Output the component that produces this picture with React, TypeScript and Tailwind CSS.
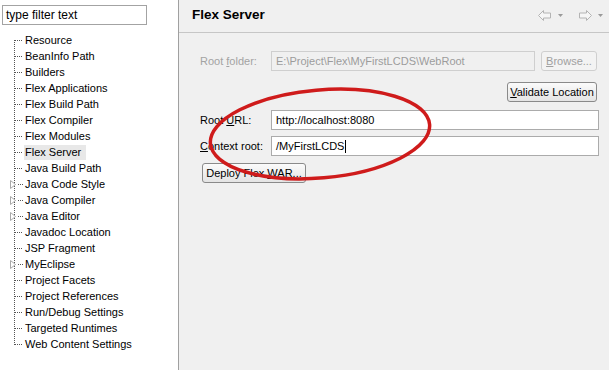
import React from "react";

type Item = { label: string; exp?: boolean; sel?: boolean };

const items: Item[] = [
  { label: "Resource" },
  { label: "BeanInfo Path" },
  { label: "Builders" },
  { label: "Flex Applications" },
  { label: "Flex Build Path" },
  { label: "Flex Compiler" },
  { label: "Flex Modules" },
  { label: "Flex Server", sel: true },
  { label: "Java Build Path" },
  { label: "Java Code Style", exp: true },
  { label: "Java Compiler", exp: true },
  { label: "Java Editor", exp: true },
  { label: "Javadoc Location" },
  { label: "JSP Fragment" },
  { label: "MyEclipse", exp: true },
  { label: "Project Facets" },
  { label: "Project References" },
  { label: "Run/Debug Settings" },
  { label: "Targeted Runtimes" },
  { label: "Web Content Settings" },
];

function Connector({ first, last, exp }: { first: boolean; last: boolean; exp?: boolean }) {
  return (
    <svg width="24" height="16" viewBox="0 0 24 16" className="shrink-0">
      <line
        x1="14.5"
        y1={first ? 8 : 0}
        x2="14.5"
        y2={last ? 9 : 16}
        stroke="#555555"
        strokeWidth="1"
        strokeDasharray="1 1"
      />
      <line x1={exp ? 18 : 15} y1="8.5" x2="23" y2="8.5" stroke="#555555" strokeWidth="1" strokeDasharray="1 1" />
      {exp && <path d="M10.5 4.5 L15.5 8.5 L10.5 12.5 Z" fill="#ffffff" stroke="#a8a8a8" strokeWidth="1" />}
    </svg>
  );
}

function NavArrow({ dir }: { dir: "left" | "right" }) {
  return (
    <svg width="14" height="11" viewBox="0 0 14 11">
      {dir === "left" ? (
        <path d="M0.5 5.5 L5.5 0.5 L5.5 3 L12.5 3 L12.5 8 L5.5 8 L5.5 10.5 Z" fill="#f6f6f6" stroke="#b4b4b4" />
      ) : (
        <path d="M13.5 5.5 L8.5 0.5 L8.5 3 L1.5 3 L1.5 8 L8.5 8 L8.5 10.5 Z" fill="#f6f6f6" stroke="#b4b4b4" />
      )}
    </svg>
  );
}

function Drop() {
  return (
    <svg width="5" height="3" viewBox="0 0 5 3">
      <path d="M0 0 L5 0 L2.5 3 Z" fill="#9a9a9a" />
    </svg>
  );
}

export default function App() {
  return (
    <div className="relative flex h-[370px] w-[609px] overflow-hidden font-['Liberation_Sans',Arial,sans-serif] text-[11px] text-black">
      {/* Left tree panel */}
      <div className="flex w-[179px] shrink-0 flex-col border-r border-[#a0a0a0] bg-white pt-[5px]">
        <div className="ml-[2px] flex h-[20px] w-[145px] items-center border border-[#a3a3a3] pl-[3px] text-[12px] leading-[16px]">
          type filter text
        </div>
        <div className="mt-[7px] flex flex-col">
          {items.map((it, i) => (
            <div key={it.label} className="flex h-[16px] items-center">
              <Connector first={i === 0} last={i === items.length - 1} exp={it.exp} />
              <span className={`pl-[1px] pr-[5px] leading-[15px] ${it.sel ? "bg-[#e8e8e8]" : ""}`}>{it.label}</span>
            </div>
          ))}
        </div>
      </div>

      {/* Right panel */}
      <div className="flex flex-1 flex-col bg-[#f0f0f0]">
        <div className="flex h-[33px] items-center border-b border-[#c6c6c6] pl-[13px] pr-[6px]">
          <span className="pb-[1px] text-[13.5px] font-bold">Flex Server</span>
          <div className="ml-auto flex items-center gap-[6px] pb-[1px]">
            <NavArrow dir="left" />
            <Drop />
            <span className="w-[3px]" />
            <NavArrow dir="right" />
            <Drop />
          </div>
        </div>

        <div className="flex flex-col pl-[21px] pr-[10px] pt-[18px]">
          {/* Root folder */}
          <div className="flex h-[20px] items-center">
            <span className="w-[71px] text-[#a3a3a3]">
              Root <u>f</u>older:
            </span>
            <div className="flex h-[20px] flex-1 items-center border border-[#cfcfcf] pl-[4px] text-[#9c9c9c]">
              E:\Project\Flex\MyFirstLCDS\WebRoot
            </div>
            <div className="ml-[6px] mr-[2px] flex h-[20px] w-[56px] items-center justify-center rounded-[3px] border border-[#cfcfcf] bg-[#f3f3f3] text-[#a0a0a0]">
              <span>
                <u>B</u>rowse...
              </span>
            </div>
          </div>

          {/* Validate */}
          <div className="mt-[11px] flex justify-end">
            <div className="mr-[2px] flex h-[20px] w-[90px] items-center justify-center rounded-[3px] border border-[#8a8a8a] bg-gradient-to-b from-[#fbfbfb] to-[#e4e4e4]">
              <span>
                <u>V</u>alidate Location
              </span>
            </div>
          </div>

          {/* Root URL */}
          <div className="mt-[8px] flex h-[20px] items-center">
            <span className="w-[71px]">
              Root <u>U</u>RL:
            </span>
            <div className="flex h-[20px] flex-1 items-center border border-[#ababab] bg-white pl-[4px]">
              http://localhost:8080
            </div>
          </div>

          {/* Context root */}
          <div className="mt-[6px] flex h-[20px] items-center">
            <span className="w-[71px]">
              <u>C</u>ontext root:
            </span>
            <div className="flex h-[20px] flex-1 items-center border border-[#ababab] bg-white pl-[4px]">
              /MyFirstLCDS
              <span className="ml-[1px] inline-block h-[13px] w-[1px] bg-black" />
            </div>
          </div>

          {/* Deploy */}
          <div className="mt-[7px] flex">
            <div className="ml-[2px] flex h-[20px] w-[104px] items-center justify-center rounded-[3px] border border-[#8a8a8a] bg-gradient-to-b from-[#fbfbfb] to-[#e4e4e4]">
              <span>
                Deploy Flex <u>W</u>AR...
              </span>
            </div>
          </div>
        </div>
      </div>

      {/* Red annotation ellipse */}
      <svg className="pointer-events-none absolute left-0 top-0" width="609" height="370" viewBox="0 0 609 370">
        <ellipse
          cx="320"
          cy="134"
          rx="110"
          ry="44"
          transform="rotate(-5 320 134)"
          fill="none"
          stroke="#cf1b1b"
          strokeWidth="3.5"
        />
      </svg>
    </div>
  );
}
